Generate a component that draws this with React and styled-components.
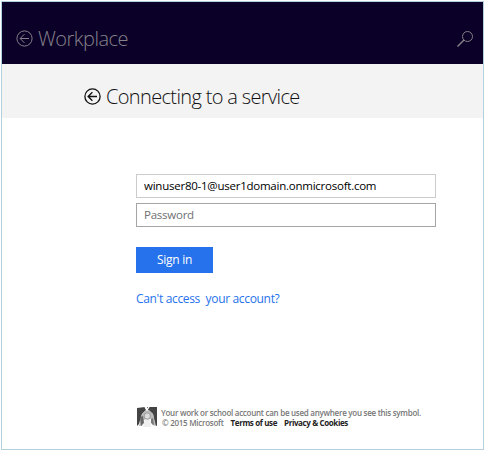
import React from 'react';
import styled, { createGlobalStyle } from 'styled-components';

const GlobalStyle = createGlobalStyle`
  * { box-sizing: border-box; }
  body { margin: 0; background: #fff; font-family: "Open Sans", "Noto Sans", sans-serif; }
`;

const Frame = styled.div`
  width: 483px;
  height: 449px;
  margin: 1px;
  border: 1px solid #b4d0de;
  background: #fff;
  display: flex;
  flex-direction: column;
  white-space: nowrap;
`;

const TopBar = styled.header`
  height: 62px;
  flex: none;
  background: #0b0027;
  color: #85828a;
  display: flex;
  align-items: flex-start;
  justify-content: space-between;
  padding: 22px 9px 0 14px;
`;

const SubBar = styled.div`
  height: 54px;
  flex: none;
  background: #f3f3f3;
  color: #111;
  display: flex;
  align-items: flex-start;
  padding: 18px 0 0 82px;
`;

const Heading = styled.h1`
  margin: 0;
  display: flex;
  align-items: center;
  gap: 5px;
  height: 28px;
  font-size: 20px;
  font-weight: 300;
  line-height: 28px;
  letter-spacing: ${(p) => p.$spacing};
`;

const HeadingText = styled.span`
  padding-top: 2px;
`;

const SearchGlyph = styled.svg`
  width: 18px;
  height: 18px;
  margin-top: 6px;
`;

const Content = styled.main`
  flex: 1;
  padding: 56px 47px 0 134px;
  display: flex;
  flex-direction: column;
  align-items: flex-start;
`;

const Field = styled.input`
  width: 300px;
  height: 24px;
  margin: 0 0 5px;
  padding: 0 7px 1px;
  border: 1px solid ${(p) => p.$border};
  border-radius: 0;
  outline: 0;
  background: #fff;
  color: #000;
  font: 11.5px "Open Sans", "Noto Sans", sans-serif;
  letter-spacing: -0.24px;
  &::placeholder { color: #707070; opacity: 1; }
`;

const SignIn = styled.button`
  width: 77px;
  height: 26px;
  margin-top: 15px;
  padding: 0 0 1px;
  border: 0;
  background: #2672ec;
  color: #fff;
  font: 12px "Open Sans", "Noto Sans", sans-serif;
  letter-spacing: -0.25px;
`;

const HelpLink = styled.a`
  margin-top: 17px;
  color: #2672ec;
  font-size: 12px;
  line-height: 18px;
  letter-spacing: -0.33px;
  white-space: pre;
`;

const Footer = styled.footer`
  display: flex;
  gap: 4px;
  margin: 99px 0 0 1px;
`;

const Legal = styled.div`
  padding-top: 1px;
  font-size: 8px;
  font-weight: 600;
  line-height: 10px;
  letter-spacing: -0.27px;
  color: #777;
`;

const LegalRow = styled.div`
  display: flex;
  gap: 7px;
  height: 10px;
  padding-left: 1px;
`;

const LegalLink = styled.a`
  color: #222;
  font-weight: 700;
  letter-spacing: -0.38px;
`;

const BackIcon = ({ width = 1 }) => (
  <svg width="17" height="17" viewBox="0 0 17 17" fill="none" stroke="currentColor" strokeWidth={width}>
    <circle cx="8.5" cy="8.5" r="7.6" />
    <path d="M13 8.5H4.3M8.4 4.2L4.1 8.5L8.4 12.8" />
  </svg>
);

const AccountSymbol = () => (
  <svg width="20" height="20" viewBox="0 0 20 20">
    <path d="M0 1L8 0L9 3L5 7L2 17L0 19Z" fill="#444" />
    <path d="M10 0L20 0V19L18 18L16 7L11 3Z" fill="#444" />
    <path d="M2 19L5 7L9 3H12L16 7L19 19L15 18L14 12L7 13L5 19Z" fill="#bbb" />
    <path d="M3 10L6 9L7 16L4 19Z" fill="#666" />
    <path d="M14 12L16 11L17 18L14 16Z" fill="#777" />
    <path d="M8 12H13L14 20H6Z" fill="#eee" />
    <circle cx="10.3" cy="9" r="3.2" fill="#ddd" stroke="#999" />
    <path d="M8 0L10 3L12 0" fill="none" stroke="#fff" strokeWidth="1.3" />
  </svg>
);

export default function App() {
  return (
    <>
      <GlobalStyle />
      <Frame>
        <TopBar>
          <Heading $spacing="-0.5px"><BackIcon /><HeadingText>Workplace</HeadingText></Heading>
          <SearchGlyph viewBox="0 0 18 18" fill="none" stroke="currentColor">
            <circle cx="11.5" cy="6.5" r="5" />
            <path d="M8 10L1.5 16.5" strokeWidth="1.4" />
          </SearchGlyph>
        </TopBar>
        <SubBar>
          <Heading $spacing="-0.65px"><BackIcon width={1.3} /><HeadingText>Connecting to a service</HeadingText></Heading>
        </SubBar>
        <Content>
          <Field $border="#ccc" defaultValue="winuser80-1@user1domain.onmicrosoft.com" />
          <Field $border="#a5a5a5" type="password" placeholder="Password" />
          <SignIn>Sign in</SignIn>
          <HelpLink>{"Can't access  your account?"}</HelpLink>
          <Footer>
            <AccountSymbol />
            <Legal>
              <div>Your work or school account can be used anywhere you see this symbol.</div>
              <LegalRow>
                <span>© 2015 Microsoft</span>
                <LegalLink>Terms of use</LegalLink>
                <LegalLink>Privacy &amp; Cookies</LegalLink>
              </LegalRow>
            </Legal>
          </Footer>
        </Content>
      </Frame>
    </>
  );
}
